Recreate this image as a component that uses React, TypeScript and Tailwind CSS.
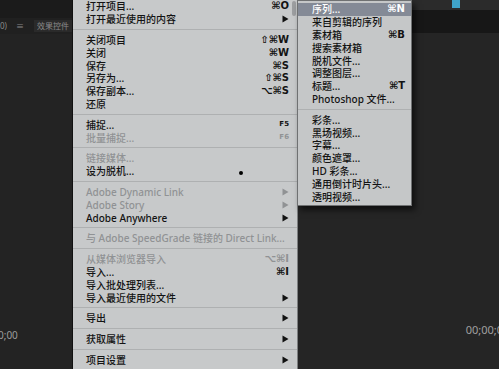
import { type ReactNode } from 'react';

type Item =
  | { sep: true }
  | { label: string; shortcut?: string; arrow?: boolean; disabled?: boolean; small?: boolean; active?: boolean; dot?: boolean };

const font = { fontFamily: '"Noto Sans", "Noto Sans CJK SC", sans-serif' };
const keyFont = { fontFamily: '"DejaVu Sans", "Liberation Sans", sans-serif' };

const mainItems: Item[] = [
  { label: '打开项目...', shortcut: '⌘O' },
  { label: '打开最近使用的内容', arrow: true },
  { sep: true },
  { label: '关闭项目', shortcut: '⇧⌘W' },
  { label: '关闭', shortcut: '⌘W' },
  { label: '保存', shortcut: '⌘S' },
  { label: '另存为...', shortcut: '⇧⌘S' },
  { label: '保存副本...', shortcut: '⌥⌘S' },
  { label: '还原' },
  { sep: true },
  { label: '捕捉...', shortcut: 'F5', small: true },
  { label: '批量捕捉...', shortcut: 'F6', small: true, disabled: true },
  { sep: true },
  { label: '链接媒体...', disabled: true },
  { label: '设为脱机...', dot: true },
  { sep: true },
  { label: 'Adobe Dynamic Link', arrow: true, disabled: true },
  { label: 'Adobe Story', arrow: true, disabled: true },
  { label: 'Adobe Anywhere', arrow: true },
  { sep: true },
  { label: '与 Adobe SpeedGrade 链接的 Direct Link...', disabled: true },
  { sep: true },
  { label: '从媒体浏览器导入', shortcut: '⌥⌘I', disabled: true },
  { label: '导入...', shortcut: '⌘I' },
  { label: '导入批处理列表...' },
  { label: '导入最近使用的文件', arrow: true },
  { sep: true },
  { label: '导出', arrow: true },
  { sep: true },
  { label: '获取属性', arrow: true },
  { sep: true },
  { label: '项目设置', arrow: true },
];

const subItems: Item[] = [
  { label: '序列...', shortcut: '⌘N', active: true },
  { label: '来自剪辑的序列' },
  { label: '素材箱', shortcut: '⌘B' },
  { label: '搜索素材箱' },
  { label: '脱机文件...' },
  { label: '调整图层...' },
  { label: '标题...', shortcut: '⌘T' },
  { label: 'Photoshop 文件...' },
  { sep: true },
  { label: '彩条...' },
  { label: '黑场视频...' },
  { label: '字幕...' },
  { label: '颜色遮罩...' },
  { label: 'HD 彩条...' },
  { label: '通用倒计时片头...' },
  { label: '透明视频...' },
];

function Arrow({ dim }: { dim?: boolean }) {
  return (
    <svg width="7" height="8" viewBox="0 0 7 8">
      <path d="M0.5 0.5 L6.5 4 L0.5 7.5 Z" fill={dim ? '#909294' : '#111'} />
    </svg>
  );
}

function MenuList({ items, pl, pr }: { items: Item[]; pl: string; pr: string }) {
  const rows: ReactNode[] = items.map((it, i) => {
    if ('sep' in it) {
      return (
        <div key={i} className="h-[8px] flex items-center">
          <div className="w-full h-px bg-[#aeb0b1]" />
        </div>
      );
    }
    const color = it.active ? 'text-white' : it.disabled ? 'text-[#909294]' : 'text-[#131313]';
    return (
      <div
        key={i}
        className={`relative h-[12.8px] flex items-center justify-between ${pl} ${pr} ${color} ${
          it.active ? 'bg-[#848a96]' : ''
        }`}
      >
        <span className="text-[10px] font-medium leading-none whitespace-nowrap" style={font}>
          {it.label}
        </span>
        {it.shortcut && (
          <span
            className={`${it.small ? 'text-[7px]' : 'text-[10px]'} font-bold leading-none`}
            style={keyFont}
          >
            {it.shortcut}
          </span>
        )}
        {it.arrow && <Arrow dim={it.disabled} />}
        {it.dot && <div className="absolute left-[166px] top-[6px] w-[4px] h-[4px] rounded-full bg-black" />}
      </div>
    );
  });
  return <>{rows}</>;
}

export default function App() {
  return (
    <div className="relative w-[499px] h-[369px] overflow-hidden bg-[#232323]">
      <div className="flex h-full">
        <div className="w-[250px] flex flex-col">
          <div className="h-[18px] bg-[#1b1b1b]" />
          <div className="h-[16px] flex items-center bg-[#202020] text-[#8a8a8a] text-[8px]" style={font}>
            <span className="w-[16px]">0)</span>
            <span className="w-[18px]">≡</span>
            <span className="px-[3px] bg-[#2a2a2a]">效果控件</span>
          </div>
          <div className="flex-1 flex flex-col justify-end pb-[26px] text-[#9c9c9c] text-[10px]" style={font}>
            <span className="-ml-[2px]">0;00</span>
          </div>
        </div>
        <div className="flex-1 flex flex-col bg-[#252525]">
          <div className="h-[10px] bg-[#2b2b2b] flex items-start pl-[202px]">
            <div className="w-[8px] h-[8px] bg-[#3fa3c8]" />
          </div>
          <div className="h-[23px] bg-[#171717]" />
          <div className="flex-1 flex flex-col justify-end items-end pb-[31px] text-[#a0a0a0] text-[11px]" style={font}>
            <span className="-mr-[4px]">00;00;0</span>
          </div>
        </div>
      </div>

      <div className="absolute left-[72px] top-0 w-[226px] h-[372px] bg-[#c7c9ca] border-l border-[#111] border-r border-r-[#7d7f80]">
        <MenuList items={mainItems} pl="pl-[13px]" pr="pr-[8px]" />
        <div className="absolute right-[1px] top-[1px] w-[4px] h-[15px] rounded bg-[#9c9ea0]" />
      </div>

      <div className="absolute left-[297px] top-0 w-[115px] pt-[2px] pb-[2px] bg-[#c5c7c8] border border-[#6f7172] shadow-[3px_4px_6px_rgba(0,0,0,0.6)]">
        <MenuList items={subItems} pl="pl-[14px]" pr="pr-[6px]" />
      </div>
    </div>
  );
}
